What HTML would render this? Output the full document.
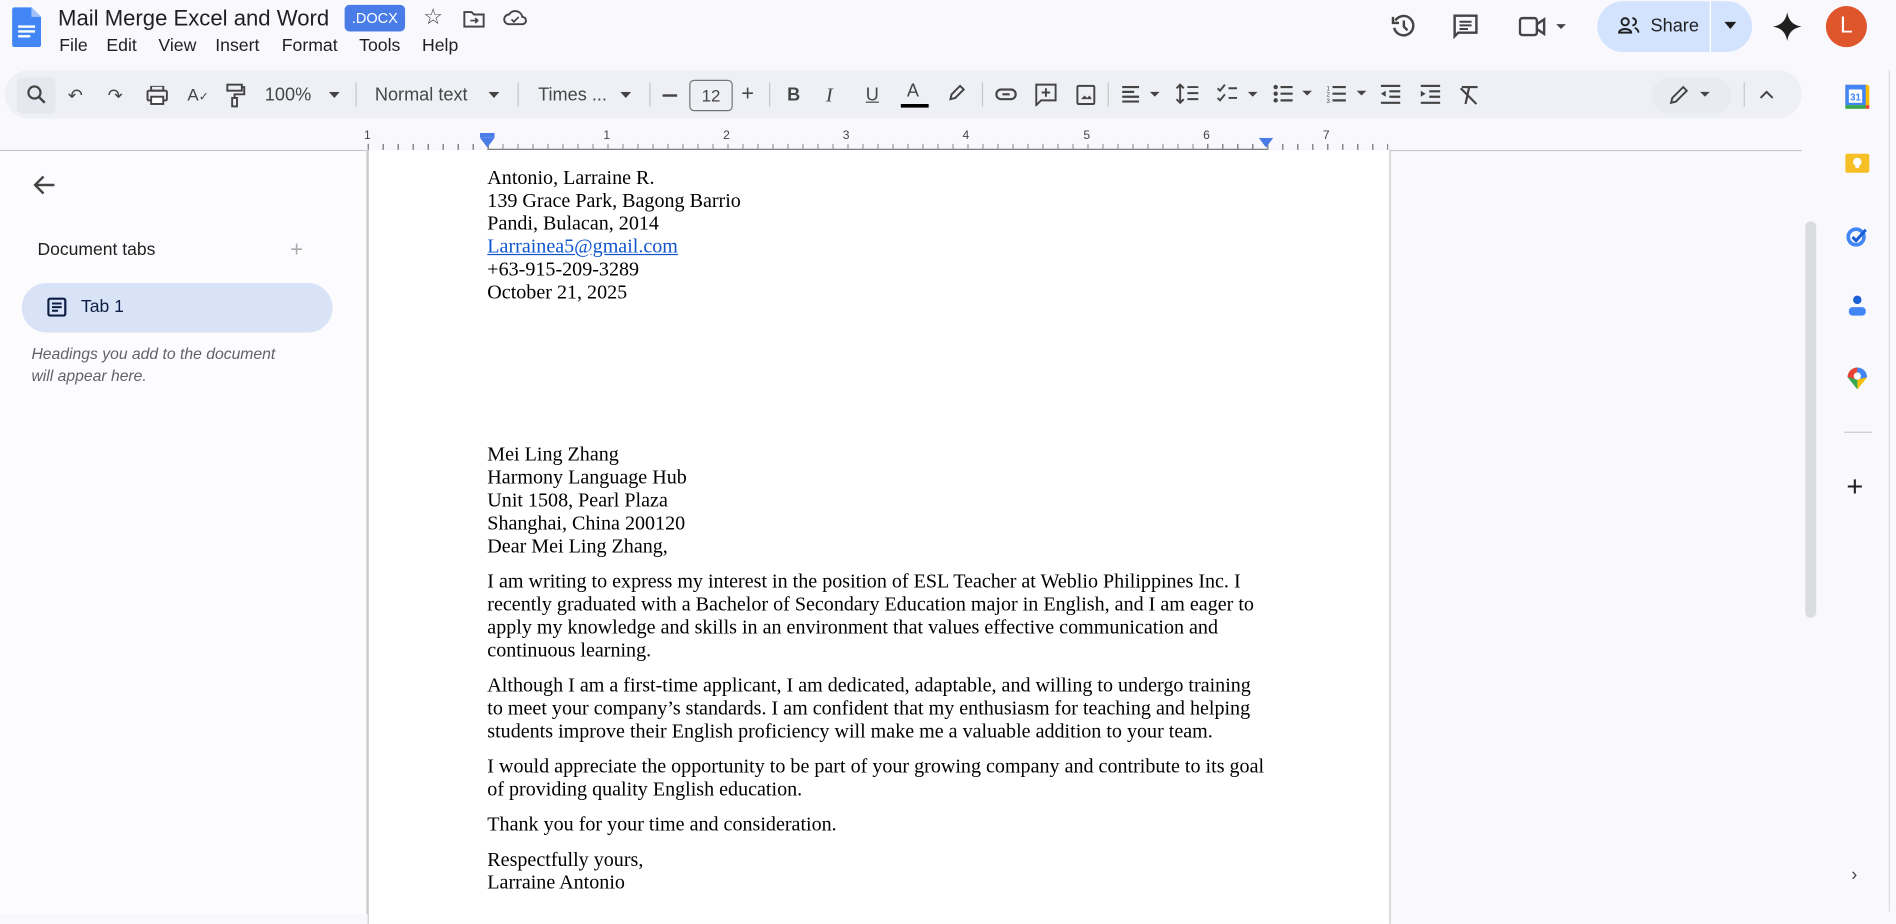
<!DOCTYPE html>
<html><head><meta charset="utf-8"><style>
html,body{margin:0;padding:0;width:1896px;height:914px;overflow:hidden;background:#f9f8fd}
#w{position:absolute;left:0;top:0;width:1568px;height:756px;transform:scale(1.20918);transform-origin:0 0;font-family:"Liberation Sans",sans-serif;color:#1f1f1f;background:#f9f8fd}
.a{position:absolute}
.m{position:absolute;top:30px;font-size:14.6px}
.tb{position:absolute;left:4px;top:58px;width:1486px;height:40px;background:#eef0f6;border-radius:20px}
.ic{position:absolute;top:70px;font-size:15px;color:#444746}
.sep{position:absolute;top:68px;width:1px;height:20px;background:#c4c7c5}
.doc{position:absolute;left:304px;top:124px;width:844px;height:640px;background:#fff;border-left:1px solid #c7c7c7;border-right:1px solid #c7c7c7}
.t{position:absolute;left:403px;font-family:"Liberation Serif",serif;font-size:16.6px;line-height:19px;color:#000;width:648px}
.t p{margin:0 0 10px 0}
</style></head><body><div id="w">
<svg class="a" style="left:10px;top:6px" width="24" height="33" viewBox="0 0 24 33"><path d="M2 0h14l8 8v23a2 2 0 0 1-2 2H2a2 2 0 0 1-2-2V2a2 2 0 0 1 2-2z" fill="#4285f4"/><path d="M16 0v8h8z" fill="#a1c2fa"/><rect x="5" y="15" width="14" height="2" fill="#fff"/><rect x="5" y="19" width="14" height="2" fill="#fff"/><rect x="5" y="23" width="10" height="2" fill="#fff"/></svg>
<div class="a" style="left:48px;top:4px;font-size:18.3px">Mail Merge Excel and Word</div>
<div class="a" style="left:285px;top:4px;width:50px;height:22px;background:#4a7ce8;border-radius:4px;color:#fff;font-size:12px;line-height:22px;text-align:center">.DOCX</div>
<div class="a" style="left:350px;top:4px;font-size:18px;color:#444">☆</div>
<svg class="a" style="left:383px;top:8px" width="18" height="15"><path d="M1 2h6l2 2h8v10H1z" fill="none" stroke="#444" stroke-width="1.6"/><path d="M6 9h6M10 7l2 2-2 2" stroke="#444" fill="none" stroke-width="1.4"/></svg>
<svg class="a" style="left:416px;top:7px" width="20" height="15"><path d="M5 13a4 4 0 0 1 0-8 6 6 0 0 1 11 2 3 3 0 0 1 0 6z" fill="none" stroke="#444" stroke-width="1.6"/><path d="M7 9l2 2 4-4" fill="none" stroke="#444" stroke-width="1.4"/></svg>
<div class="m" style="left:49px">File</div><div class="m" style="left:88px">Edit</div><div class="m" style="left:131px">View</div><div class="m" style="left:178px">Insert</div><div class="m" style="left:233px">Format</div><div class="m" style="left:297px">Tools</div><div class="m" style="left:349px">Help</div>
<svg class="a" style="left:1149px;top:10px" width="24" height="24" viewBox="0 0 24 24"><path d="M5 7a8 8 0 1 1-1 6" fill="none" stroke="#444" stroke-width="2"/><path d="M3 4v5h5" fill="none" stroke="#444" stroke-width="2"/><path d="M12 7v5l3 3" fill="none" stroke="#444" stroke-width="2"/></svg>
<svg class="a" style="left:1201px;top:11px" width="22" height="22" viewBox="0 0 22 22"><path d="M2 2h18v14H5l-3 3z" fill="none" stroke="#444" stroke-width="2"/><path d="M6 7h10M6 10h10M6 13h7" stroke="#444" stroke-width="1.6"/></svg>
<svg class="a" style="left:1256px;top:13px" width="42" height="18"><rect x="1" y="2" width="14" height="14" rx="2" fill="none" stroke="#444" stroke-width="2"/><path d="M15 7l6-4v12l-6-4" fill="none" stroke="#444" stroke-width="2"/><path d="M31 7h8l-4 4z" fill="#444"/></svg>
<div class="a" style="left:1321px;top:1px;width:128px;height:42px;background:#d3e3fd;border-radius:21px"></div>
<div class="a" style="left:1414px;top:1px;width:1px;height:42px;background:#fff"></div>
<svg class="a" style="left:1338px;top:14px" width="18" height="14"><circle cx="6" cy="4" r="3" fill="none" stroke="#1f1f1f" stroke-width="1.6"/><path d="M1 13c0-4 10-4 10 0z" fill="none" stroke="#1f1f1f" stroke-width="1.6"/><path d="M12 1a3 3 0 0 1 0 6M14 9c2 1 3 2 3 4" fill="none" stroke="#1f1f1f" stroke-width="1.6"/></svg>
<div class="a" style="left:1365px;top:13px;font-size:15px;font-weight:500">Share</div>
<svg class="a" style="left:1426px;top:18px" width="10" height="6"><path d="M0 0h10L5 6z" fill="#1f1f1f"/></svg>
<svg class="a" style="left:1466px;top:10px" width="24" height="24" viewBox="0 0 24 24"><path d="M12 0C13 7 17 11 24 12 17 13 13 17 12 24 11 17 7 13 0 12 7 11 11 7 12 0z" fill="#1f1f1f"/></svg>
<div class="a" style="left:1510px;top:5px;width:34px;height:34px;border-radius:50%;background:#e0562c;color:#fff;font-size:19px;line-height:34px;text-align:center">L</div>
<div class="tb"></div>
<div class="a" style="left:14px;top:64px;width:32px;height:30px;background:#e6e8f0;border-radius:4px"></div>
<svg class="a" style="left:22px;top:70px" width="16" height="16"><circle cx="6.5" cy="6.5" r="5" fill="none" stroke="#444" stroke-width="1.8"/><path d="M10 10l5 5" stroke="#444" stroke-width="2"/></svg>
<div class="ic" style="left:56px">↶</div><div class="ic" style="left:89px">↷</div>
<svg class="a" style="left:121px;top:71px" width="18" height="16"><rect x="4" y="0" width="10" height="4" fill="none" stroke="#444" stroke-width="1.6"/><rect x="1" y="4" width="16" height="8" rx="1" fill="none" stroke="#444" stroke-width="1.6"/><rect x="4" y="9" width="10" height="6" fill="#fff" stroke="#444" stroke-width="1.6"/></svg>
<div class="ic" style="left:155px;font-size:14px">A<span style="font-size:10px">✓</span></div>
<svg class="a" style="left:187px;top:69px" width="16" height="20"><rect x="1" y="1" width="12" height="5" fill="none" stroke="#444" stroke-width="1.6"/><path d="M13 3h2v6H7v3" fill="none" stroke="#444" stroke-width="1.6"/><rect x="5" y="12" width="4" height="7" fill="none" stroke="#444" stroke-width="1.6"/></svg>
<div class="ic" style="left:219px;top:70px">100%</div><svg class="a" style="left:272px;top:76px" width="9" height="5"><path d="M0 0h9L4.5 5z" fill="#444"/></svg>
<div class="sep" style="left:294px"></div>
<div class="ic" style="left:310px">Normal text</div><svg class="a" style="left:404px;top:76px" width="9" height="5"><path d="M0 0h9L4.5 5z" fill="#444"/></svg>
<div class="sep" style="left:428px"></div>
<div class="ic" style="left:445px">Times ...</div><svg class="a" style="left:513px;top:76px" width="9" height="5"><path d="M0 0h9L4.5 5z" fill="#444"/></svg>
<div class="sep" style="left:537px"></div>
<div class="a" style="left:548px;top:78px;width:12px;height:1.6px;background:#444"></div>
<div class="a" style="left:570px;top:66px;width:34px;height:24px;border:1px solid #747775;border-radius:4px;font-size:14px;line-height:24px;text-align:center;color:#444">12</div>
<div class="ic" style="left:613px;top:67px;font-size:18px">+</div>
<div class="sep" style="left:636px"></div>
<div class="ic" style="left:651px;font-weight:bold">B</div>
<div class="ic" style="left:683px;font-style:italic;font-family:'Liberation Serif',serif;font-size:17px;top:69px">I</div>
<div class="ic" style="left:716px;text-decoration:underline">U</div>
<div class="ic" style="left:750px;top:67px">A</div><div class="a" style="left:745px;top:86px;width:23px;height:3px;background:#000"></div>
<svg class="a" style="left:783px;top:69px" width="16" height="16"><path d="M3 13l1-4 7-7 3 3-7 7z" fill="none" stroke="#444" stroke-width="1.6"/></svg>
<div class="sep" style="left:812px"></div>
<svg class="a" style="left:823px;top:73px" width="18" height="10"><rect x="1" y="1" width="16" height="8" rx="4" fill="none" stroke="#444" stroke-width="1.8"/><path d="M6 5h6" stroke="#444" stroke-width="1.8"/></svg>
<svg class="a" style="left:856px;top:69px" width="18" height="19"><path d="M1 1h16v13H5l-4 4z" fill="none" stroke="#444" stroke-width="1.6"/><path d="M9 4v7M5.5 7.5h7" stroke="#444" stroke-width="1.6"/></svg>
<svg class="a" style="left:890px;top:70px" width="16" height="17"><rect x="1" y="1" width="14" height="15" rx="1" fill="none" stroke="#444" stroke-width="1.6"/><path d="M4 12l3-3 2 2 2-2 2 3z" fill="#444"/></svg>
<div class="sep" style="left:916px"></div>
<svg class="a" style="left:928px;top:71px" width="36" height="14"><path d="M0 1h14M0 5h10M0 9h14M0 13h14" stroke="#444" stroke-width="1.8"/><path d="M23 5h8l-4 4z" fill="#444"/></svg>
<svg class="a" style="left:972px;top:69px" width="20" height="17"><path d="M4 1v15M1 4l3-3 3 3M1 13l3 3 3-3M10 3h9M10 8h9M10 13h9" fill="none" stroke="#444" stroke-width="1.6"/></svg>
<svg class="a" style="left:1006px;top:69px" width="36" height="17"><path d="M1 4l2 2 4-5M1 12l2 2 4-5M10 4h7M10 12h7" fill="none" stroke="#444" stroke-width="1.6"/><path d="M26 7h8l-4 4z" fill="#444"/></svg>
<svg class="a" style="left:1053px;top:70px" width="36" height="15"><circle cx="2" cy="2" r="1.8" fill="#444"/><circle cx="2" cy="7.5" r="1.8" fill="#444"/><circle cx="2" cy="13" r="1.8" fill="#444"/><path d="M6 2h10M6 7.5h10M6 13h10" stroke="#444" stroke-width="1.8"/><path d="M24 5h8l-4 4z" fill="#444"/></svg>
<svg class="a" style="left:1097px;top:70px" width="36" height="16"><text x="0" y="5" font-size="5" fill="#444">1</text><text x="0" y="10" font-size="5" fill="#444">2</text><text x="0" y="15" font-size="5" fill="#444">3</text><path d="M5 2h11M5 7.5h11M5 13h11" stroke="#444" stroke-width="1.8"/><path d="M25 5h8l-4 4z" fill="#444"/></svg>
<svg class="a" style="left:1141px;top:70px" width="18" height="16"><path d="M1 1h16M8 5.5h9M8 10h9M1 15h16" stroke="#444" stroke-width="1.8"/><path d="M5 5v5L1 7.5z" fill="#444"/></svg>
<svg class="a" style="left:1174px;top:70px" width="18" height="16"><path d="M1 1h16M8 5.5h9M8 10h9M1 15h16" stroke="#444" stroke-width="1.8"/><path d="M1 5v5l4-2.5z" fill="#444"/></svg>
<svg class="a" style="left:1206px;top:70px" width="18" height="17"><path d="M3 2h13M9 2l-3 14M2 3l13 13" stroke="#444" stroke-width="1.8"/></svg>
<div class="a" style="left:1366px;top:64px;width:66px;height:30px;background:#e9ebf3;border-radius:15px"></div>
<svg class="a" style="left:1380px;top:70px" width="36" height="17"><path d="M2 15l1-4 9-9 3 3-9 9z" fill="none" stroke="#444" stroke-width="1.6"/><path d="M26 6h8l-4 4z" fill="#444"/></svg>
<div class="sep" style="left:1442px"></div>
<svg class="a" style="left:1455px;top:74px" width="12" height="8"><path d="M1 7l5-5 5 5" fill="none" stroke="#444" stroke-width="1.6"/></svg>
<div class="a" style="left:0;top:124px;width:1490px;height:1px;background:#c7c7c7"></div>
<div class="a" style="left:403px;top:123px;width:645px;height:2px;background:#747775"></div>
<div class="a" style="left:301px;top:107px;font-size:10px;color:#444">1</div>
<div class="a" style="left:499px;top:107px;font-size:10px;color:#444">1</div>
<div class="a" style="left:598px;top:107px;font-size:10px;color:#444">2</div>
<div class="a" style="left:697px;top:107px;font-size:10px;color:#444">3</div>
<div class="a" style="left:796px;top:107px;font-size:10px;color:#444">4</div>
<div class="a" style="left:896px;top:107px;font-size:10px;color:#444">5</div>
<div class="a" style="left:995px;top:107px;font-size:10px;color:#444">6</div>
<div class="a" style="left:1094px;top:107px;font-size:10px;color:#444">7</div>
<div class="a" style="left:304px;top:119px;width:844px;height:5px;background:repeating-linear-gradient(90deg,#888 0 1px,transparent 1px 12.4px)"></div>
<div class="a" style="left:397px;top:110px;width:12px;height:4px;background:#4a7ce8"></div>
<svg class="a" style="left:397px;top:114px" width="12" height="8"><path d="M0 0h12L6 8z" fill="#4a7ce8"/></svg>
<svg class="a" style="left:1041px;top:114px" width="12" height="8"><path d="M0 0h12L6 8z" fill="#4a7ce8"/></svg>
<div class="a" style="left:0;top:125px;width:303px;height:631px;background:#fcfbfe;border-right:1px solid #c7c7c7"></div>
<svg class="a" style="left:26px;top:144px" width="20" height="18"><path d="M19 9H3M10 2L3 9l7 7" fill="none" stroke="#444" stroke-width="2"/></svg>
<div class="a" style="left:31px;top:199px;font-size:14.5px;color:#1f1f1f">Document tabs</div>
<div class="a" style="left:240px;top:196px;font-size:18px;color:#aaa">+</div>
<div class="a" style="left:18px;top:234px;width:257px;height:41px;background:#d9e3f8;border-radius:21px"></div>
<svg class="a" style="left:39px;top:246px" width="16" height="16"><rect x="1" y="1" width="14" height="14" rx="1.5" fill="none" stroke="#0b1d43" stroke-width="1.8"/><path d="M4 5h8M4 8h8M4 11h5" stroke="#0b1d43" stroke-width="1.6"/></svg>
<div class="a" style="left:67px;top:246px;font-size:14.5px;color:#0b1d43">Tab 1</div>
<div class="a" style="left:26px;top:284px;font-size:13px;line-height:18px;font-style:italic;color:#5f6368">Headings you add to the document<br>will appear here.</div>
<div class="doc"></div>
<div class="t" style="top:137px">Antonio, Larraine R.<br>139 Grace Park, Bagong Barrio<br>Pandi, Bulacan, 2014<br><span style="color:#1155cc;text-decoration:underline">Larrainea5@gmail.com</span><br>+63-915-209-3289<br>October 21, 2025</div>
<div class="t" style="top:366px"><p style="margin:0">Mei Ling Zhang<br>Harmony Language Hub<br>Unit 1508, Pearl Plaza<br>Shanghai, China 200120<br>Dear Mei Ling Zhang,</p>
<p style="margin-top:10px">I am writing to express my interest in the position of ESL Teacher at Weblio Philippines Inc. I recently graduated with a Bachelor of Secondary Education major in English, and I am eager to apply my knowledge and skills in an environment that values effective communication and continuous learning.</p>
<p>Although I am a first-time applicant, I am dedicated, adaptable, and willing to undergo training to meet your company’s standards. I am confident that my enthusiasm for teaching and helping students improve their English proficiency will make me a valuable addition to your team.</p>
<p>I would appreciate the opportunity to be part of your growing company and contribute to its goal of providing quality English education.</p>
<p>Thank you for your time and consideration.</p>
<p>Respectfully yours,<br>Larraine Antonio</p></div>
<div class="a" style="left:1493px;top:183px;width:9px;height:328px;background:#dadce0;border-radius:5px"></div>
<div class="a" style="left:1512px;top:58px;width:50px;height:696px;background:#f9f8fd;border-right:1px solid #ddd"></div>
<svg class="a" style="left:1526px;top:70px" width="20" height="20"><rect x="0" y="0" width="20" height="20" rx="2" fill="#fbbc04"/><rect x="0" y="0" width="17" height="17" fill="#4285f4"/><rect x="0" y="17" width="17" height="3" fill="#34a853"/><rect x="17" y="17" width="3" height="3" fill="#ea4335"/><rect x="3" y="4" width="11" height="11" fill="#fff"/><text x="8.5" y="13" font-size="8" font-weight="bold" text-anchor="middle" fill="#4285f4" font-family="Liberation Sans">31</text></svg>
<svg class="a" style="left:1526px;top:127px" width="20" height="16"><rect width="20" height="16" rx="2" fill="#f6bf26"/><circle cx="10" cy="7" r="3.5" fill="#fff"/><rect x="8.5" y="10" width="3" height="2" fill="#fff"/></svg>
<svg class="a" style="left:1527px;top:186px" width="20" height="18"><circle cx="8" cy="10" r="6.5" fill="none" stroke="#4285f4" stroke-width="3"/><path d="M5 10l3 3 8-9" fill="none" stroke="#1a5fd6" stroke-width="2.5"/></svg>
<svg class="a" style="left:1528px;top:244px" width="16" height="18"><circle cx="8" cy="4" r="3.5" fill="#1a5fd6"/><rect x="1" y="10" width="14" height="7" rx="3" fill="#4285f4"/></svg>
<svg class="a" style="left:1527px;top:302px" width="18" height="20"><path d="M9 20L1 10a8 8 0 1 1 16 0z" fill="#34a853"/><path d="M1 10a8 8 0 0 1 8-8v10z" fill="#ea4335"/><path d="M9 2a8 8 0 0 1 8 8l-8 2z" fill="#4285f4"/><path d="M17 10L9 20V12z" fill="#fbbc04"/><circle cx="9" cy="9" r="3" fill="#fff"/></svg>
<div class="a" style="left:1525px;top:357px;width:23px;height:1px;background:#ccc"></div>
<div class="a" style="left:1527px;top:389px;font-size:24px;color:#1f1f1f;line-height:28px">+</div>
<div class="a" style="left:1531px;top:715px;font-size:15px;color:#444">›</div>
</div></body></html>
